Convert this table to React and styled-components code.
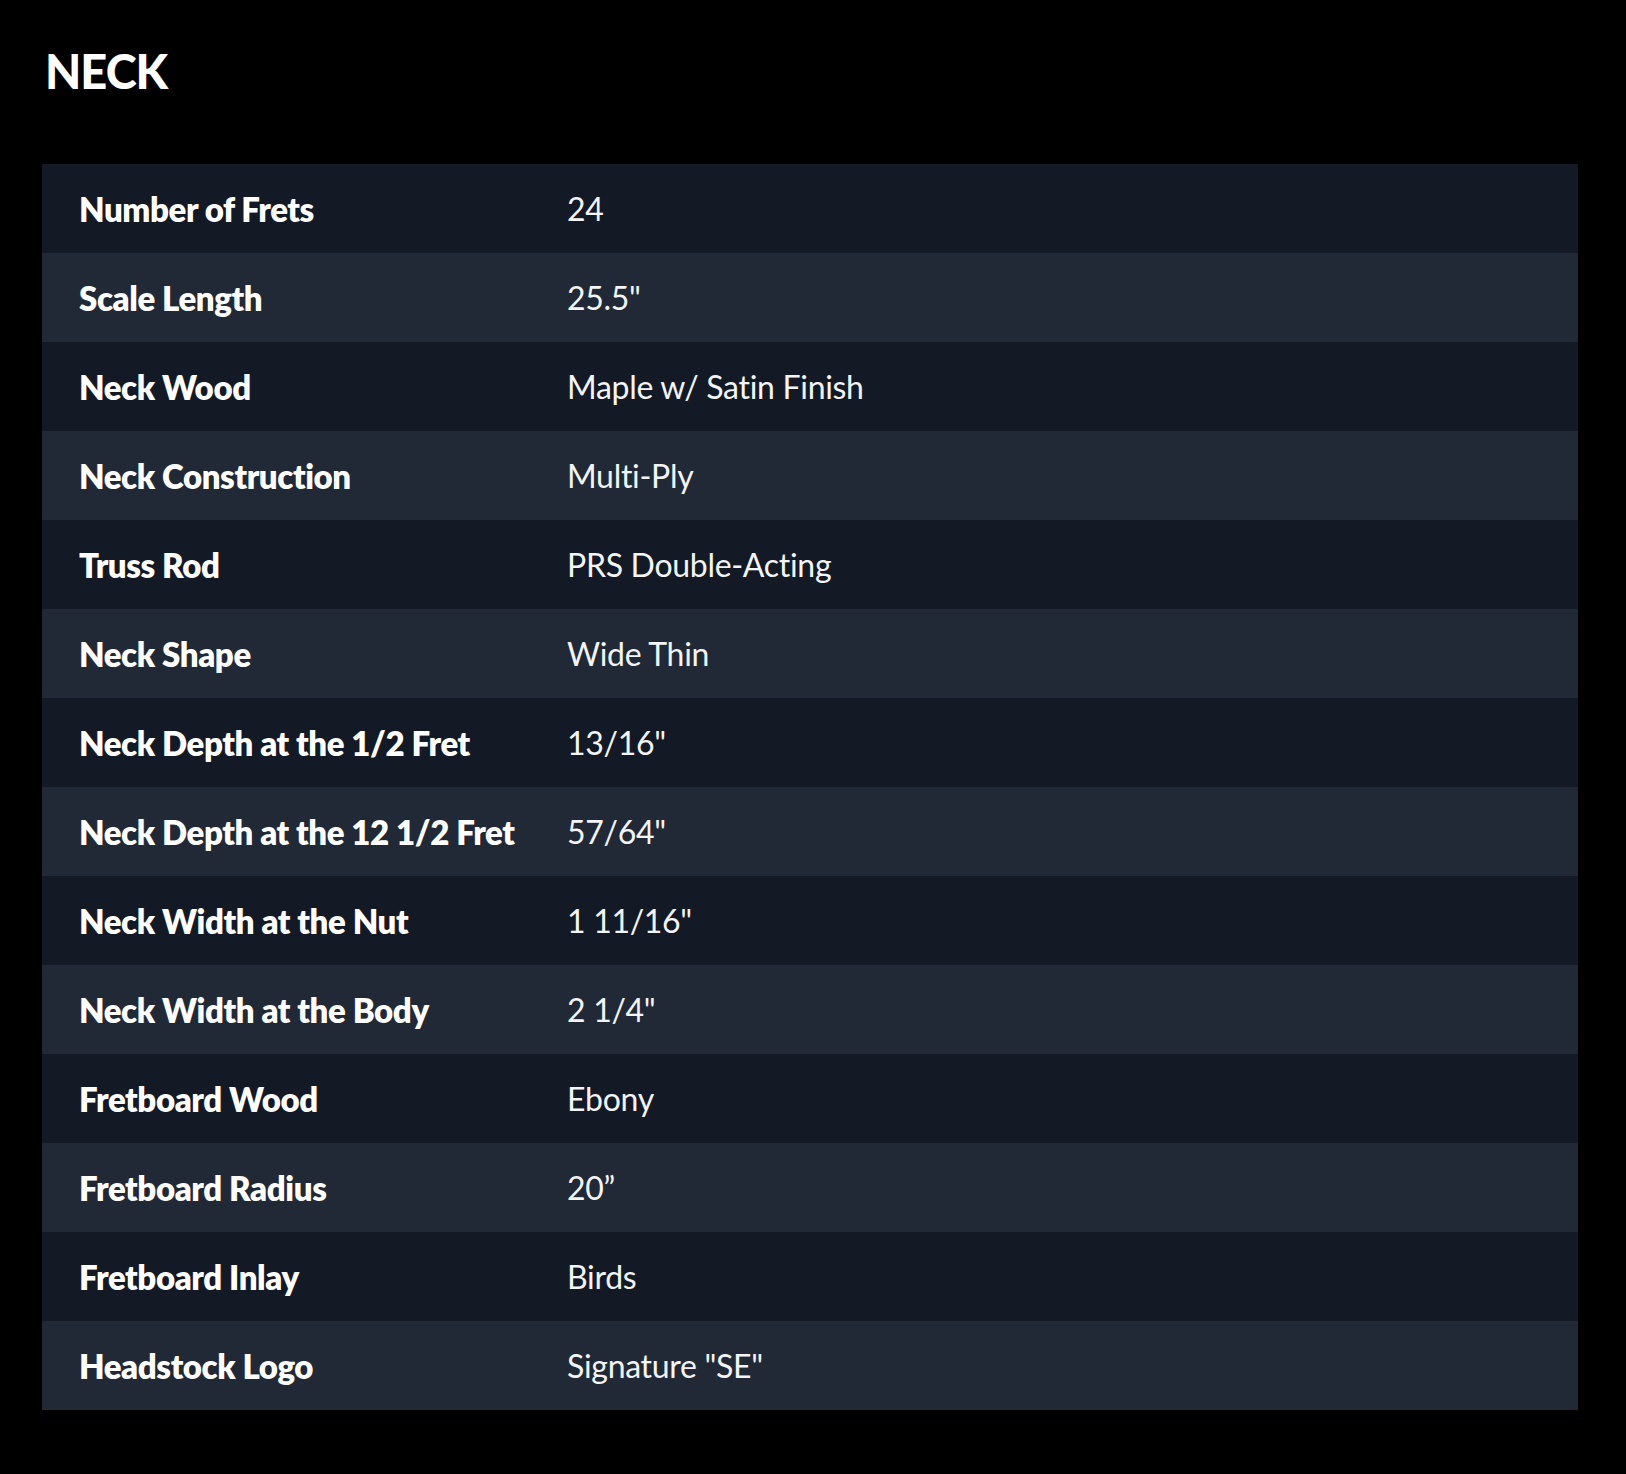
import React from 'react';
import styled, { createGlobalStyle } from 'styled-components';

const GlobalStyle = createGlobalStyle`
  html, body {
    margin: 0;
    padding: 0;
    background: #000;
  }
  body {
    font-family: Lato, "Open Sans", Arial, sans-serif;
    color: #fff;
    -webkit-font-smoothing: antialiased;
  }
`;

const Page = styled.div`
  min-height: 1474px;
  background: #000;
  padding: 0 48px 0 42px;
  box-sizing: border-box;
`;

const Title = styled.h2`
  margin: 0;
  padding: 41px 0 0 3px;
  height: 164px;
  box-sizing: border-box;
  font-size: 47px;
  line-height: 60px;
  font-weight: 900;
  letter-spacing: -1px;
  color: #fff;
`;

const SpecTable = styled.div`
  width: 1536px;
  display: flex;
  flex-direction: column;
`;

const Row = styled.div`
  display: grid;
  grid-template-columns: 488px 1fr;
  align-items: center;
  height: 89px;
  background: ${(p) => (p.$alt ? '#222936' : '#141926')};
`;

const Label = styled.div`
  padding-left: 37px;
  font-size: 33px;
  font-weight: 800;
  letter-spacing: -0.4px;
  color: #fff;
`;

const Value = styled.div`
  padding-left: 37px;
  font-size: 32px;
  font-weight: 400;
  letter-spacing: -0.3px;
  color: #f3f4f6;
`;

const specs = [
  ['Number of Frets', '24'],
  ['Scale Length', '25.5"'],
  ['Neck Wood', 'Maple w/ Satin Finish'],
  ['Neck Construction', 'Multi-Ply'],
  ['Truss Rod', 'PRS Double-Acting'],
  ['Neck Shape', 'Wide Thin'],
  ['Neck Depth at the 1/2 Fret', '13/16"'],
  ['Neck Depth at the 12 1/2 Fret', '57/64"'],
  ['Neck Width at the Nut', '1 11/16"'],
  ['Neck Width at the Body', '2 1/4"'],
  ['Fretboard Wood', 'Ebony'],
  ['Fretboard Radius', '20\u201d'],
  ['Fretboard Inlay', 'Birds'],
  ['Headstock Logo', 'Signature "SE"'],
];

export default function App() {
  return (
    <>
      <GlobalStyle />
      <Page>
        <Title>NECK</Title>
        <SpecTable>
          {specs.map(([label, value], i) => (
            <Row key={label} $alt={i % 2 === 1}>
              <Label>{label}</Label>
              <Value>{value}</Value>
            </Row>
          ))}
        </SpecTable>
      </Page>
    </>
  );
}
